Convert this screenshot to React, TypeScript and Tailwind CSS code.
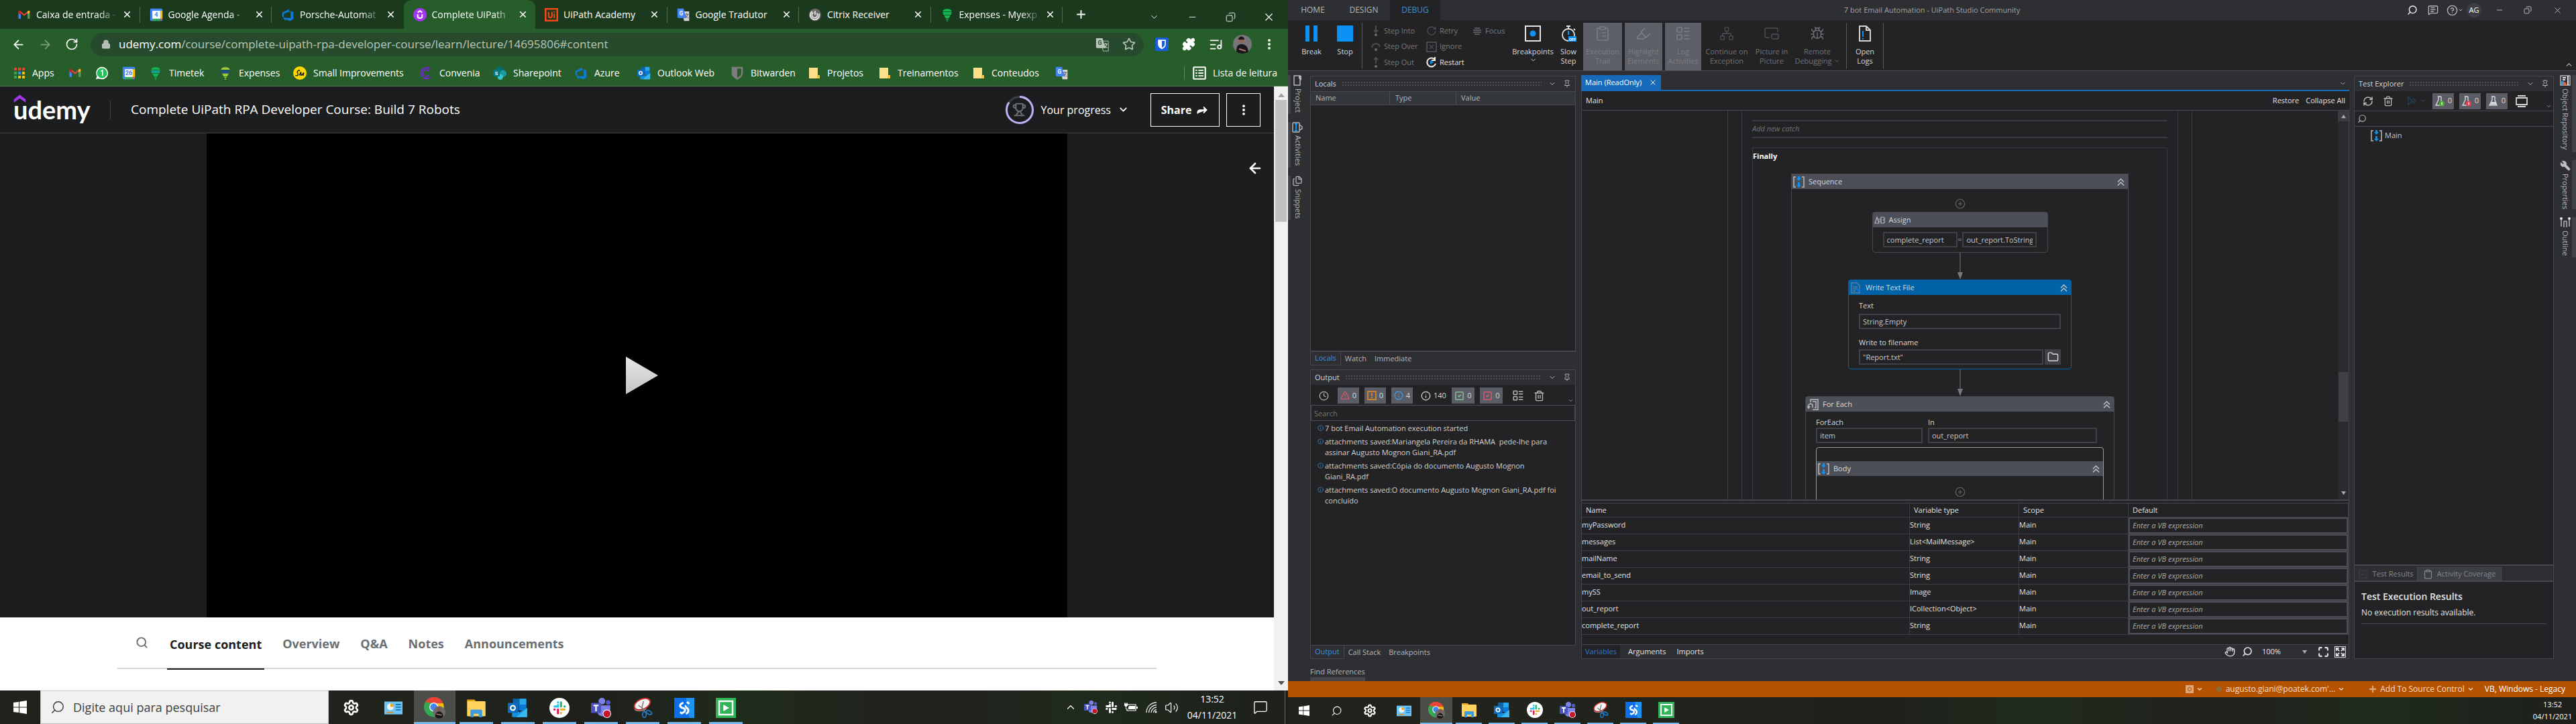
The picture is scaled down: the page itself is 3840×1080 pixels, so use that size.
import React from "react";
import {
  ArrowLeft,
  ArrowRight,
  RotateCw,
  Lock,
  Star,
  Puzzle,
  ListMusic,
  EllipsisVertical,
  X,
  Plus,
  Minus,
  Copy,
  ChevronDown,
  ChevronUp,
  Trophy,
  Forward,
  Search,
  Settings,
  Volume2,
  MessageSquare,
  Trash2,
  Clock,
  Info,
  TriangleAlert,
  Pin,
  Folder,
  RefreshCw,
  Hand,
  Maximize,
  Expand,
  ClipboardList,
  Clipboard,
  Highlighter,
  Network,
  PictureInPicture2,
  Bug,
  CircleHelp,
  Wrench,
  Files,
  SquareCheck,
  CirclePlus,
  LayoutList,
  MessageSquareText,
} from "lucide-react";

type IconProps = { s?: number };

function Svg({ s = 20, box = 24, children }: { s?: number; box?: number; children: React.ReactNode }) {
  return (
    <svg width={s} height={s} viewBox={`0 0 ${box} ${box}`} fill="none" aria-hidden="true" className="shrink-0">
      {children}
    </svg>
  );
}

/* ---------- brand icons ---------- */

const Gmail = ({ s }: IconProps) => (
  <Svg s={s}>
    <path d="M2 6v13h4V9l6 5 6-5v10h4V6l-3-1-7 6-7-6z" fill="#ea4335" />
    <path d="M2 8v11h4V10z" fill="#4285f4" />
    <path d="M18 10v9h4V8z" fill="#34a853" />
    <path d="M18 6v5l4-3V6c0-2-2-2-4 0z" fill="#fbbc04" />
    <path d="M2 6v3l4 3V6C4 4 2 4 2 6z" fill="#c5221f" />
  </Svg>
);

const Calendar = ({ s, day }: IconProps & { day: string }) => (
  <Svg s={s}>
    <rect x="1" y="1" width="22" height="22" rx="2" fill="#4285f4" />
    <rect x="19" y="5" width="4" height="14" fill="#fbbc04" />
    <rect x="5" y="19" width="14" height="4" fill="#34a853" />
    <path d="M19 19h4l-4 4z" fill="#ea4335" />
    <rect x="5" y="5" width="14" height="14" fill="#fff" />
    <text x="12" y="16" textAnchor="middle" fontSize="11" fontWeight="700" fill="#4285f4" fontFamily="Roboto, sans-serif">
      {day}
    </text>
  </Svg>
);

const DevOps = ({ s }: IconProps) => (
  <Svg s={s}>
    <path d="M2 8l12-6v3l8 2v13l-6 3-8-3v3L3 17l14 1V6L5 10v7l-3-2z" fill="#0b7bd8" />
  </Svg>
);

const UdemyMark = ({ s }: IconProps) => (
  <Svg s={s}>
    <circle cx="12" cy="12" r="12" fill="#a435f0" />
    <path d="M8 8l4-3 4 3M8 11v4c0 4 8 4 8 0v-4" stroke="#fff" strokeWidth="2.4" />
  </Svg>
);

const UiPathMark = ({ s }: IconProps) => (
  <Svg s={s}>
    <rect x="1.5" y="1.5" width="21" height="21" stroke="#fa4616" strokeWidth="3" />
    <path d="M7 7v7c0 4 6 4 6 0V7M17 10v8M17 6v2" stroke="#fa4616" strokeWidth="2.4" />
  </Svg>
);

const Translate = ({ s, gray }: IconProps & { gray?: boolean }) => (
  <Svg s={s}>
    <path d="M9 6h13v17H13z" fill={gray ? "#274a2c" : "#d5d5d5"} stroke={gray ? "#b9c6ba" : "none"} />
    <path d="M1 1h11l5 17H3c-1 0-2-1-2-2z" fill={gray ? "#b9c6ba" : "#4285f4"} />
    <text x="7.5" y="13" textAnchor="middle" fontSize="10" fontWeight="700" fill={gray ? "#274a2c" : "#fff"} fontFamily="Roboto, sans-serif">
      G
    </text>
    <path d="M14 11h7M17.500 9v2M19.500 11c-1 4-3 6-4 7M15.500 13c1 3 3 4 5 5" stroke={gray ? "#b9c6ba" : "#5f6368"} strokeWidth="1.300" />
  </Svg>
);

const Citrix = ({ s }: IconProps) => (
  <Svg s={s}>
    <circle cx="12" cy="12" r="11" fill="#6a6a6a" />
    <path d="M7 6a8 8 0 1 0 12 4M9 8a5 5 0 1 0 6 1M12 5v7" stroke="#f1f1f1" strokeWidth="2" />
  </Svg>
);

const Balloon = ({ s, a, b, c }: IconProps & { a: string; b: string; c: string }) => (
  <Svg s={s}>
    <path d="M4 6c1-6 15-6 16 0z" fill={a} />
    <path d="M4 7h16l-1 5H5z" fill={b} />
    <path d="M6 13h12l-3 5H9z" fill={c} />
    <path d="M9 19h6l-2 2h-2zM11 22h2v2h-2z" fill={a} />
  </Svg>
);

const AppsGrid = () => (
  <Svg s={18} box={18}>
    {["#ea4335", "#ea4335", "#ea4335", "#34a853", "#4285f4", "#fbbc04", "#34a853", "#fbbc04", "#fbbc04"].map((c, i) => (
      <rect key={i} x={(i % 3) * 6 + 1} y={Math.floor(i / 3) * 6 + 1} width="4" height="4" fill={c} />
    ))}
  </Svg>
);

const WhatsApp = ({ s }: IconProps) => (
  <Svg s={s}>
    <path d="M12 1a11 11 0 0 1 0 22c-2 0-4 0-6-1l-5 1 2-5C-1 10 4 1 12 1z" fill="#fff" />
    <circle cx="12" cy="12" r="9" fill="#1fc15b" />
    <path d="M10 9l3-2v10" stroke="#fff" strokeWidth="2" />
  </Svg>
);

const SmallImp = ({ s }: IconProps) => (
  <Svg s={s}>
    <circle cx="12" cy="12" r="12" fill="#ffd800" />
    <path d="M4 16c4 2 6-1 4-4s2-6 4-4M11 16l3-6v6c2 0 3-2 5-5l-1 6" stroke="#111" strokeWidth="1.600" />
  </Svg>
);

const Convenia = ({ s }: IconProps) => (
  <Svg s={s}>
    <path d="M19 4A10 10 0 1 0 19 20M17 8a6 6 0 1 0 0 8" stroke="#7c1fe0" strokeWidth="2.400" strokeDasharray="9 1.500" />
  </Svg>
);

const SharePoint = ({ s }: IconProps) => (
  <Svg s={s}>
    <circle cx="12" cy="7" r="7" fill="#036c70" />
    <circle cx="18" cy="13" r="6" fill="#1a9ba1" />
    <circle cx="13" cy="19" r="5" fill="#37c6d0" />
    <rect x="0" y="6" width="12" height="12" rx="1" fill="#03787c" />
    <text x="6" y="15.500" textAnchor="middle" fontSize="9" fontWeight="700" fill="#fff" fontFamily="Roboto, sans-serif">
      S
    </text>
  </Svg>
);

const Outlook = ({ s }: IconProps) => (
  <Svg s={s}>
    <rect x="6" y="1" width="16" height="14" rx="1" fill="#0a64ad" />
    <rect x="14" y="1" width="8" height="8" fill="#28a8ea" />
    <rect x="14" y="8" width="8" height="7" fill="#0f78d4" />
    <path d="M5 12l9 5 9-5v10c0 1-1 1-1 1H6c-1 0-1-1-1-1z" fill="#1490df" />
    <path d="M23 12v10c0 1-1 1-1 1H10z" fill="#35b8f1" />
    <rect x="0" y="6" width="12" height="12" rx="1" fill="#0f6cbd" />
    <circle cx="6" cy="12" r="2.700" stroke="#fff" strokeWidth="1.700" />
  </Svg>
);

const Shield = ({ s, blue }: IconProps & { blue?: boolean }) => (
  <Svg s={s}>
    {blue && <rect width="24" height="24" rx="3" fill="#175ddc" />}
    {blue ? (
      <g>
        <path d="M5 4h14v8c0 5-4 7-7 9-3-2-7-4-7-9z" fill="#fff" />
        <path d="M12 6h5v6c0 3-2 5-5 6z" fill="#175ddc" />
      </g>
    ) : (
      <g>
        <path d="M2 1h20v11c0 6-5 9-10 12C7 21 2 18 2 12z" fill="#7d7d7d" />
        <path d="M12 4h7v8c0 4-3 6-7 8z" fill="#275d2b" />
      </g>
    )}
  </Svg>
);

const BookmarkFolder = () => (
  <Svg s={18} box={18}>
    <path d="M1 1h13v11h2v5H1z" fill="#ffe08a" />
    <path d="M13 12h4v5h-4z" fill="#f5c542" />
  </Svg>
);

const Chrome = ({ s }: IconProps) => (
  <Svg s={s}>
    <circle cx="11" cy="11" r="11" fill="#34a853" />
    <path d="M1.500 5.500A11 11 0 0 1 21.500 7H11z" fill="#ea4335" />
    <path d="M21.500 7A11 11 0 0 1 11 22l5-9-2-6z" fill="#fbbc04" />
    <circle cx="11" cy="11" r="5" fill="#fff" />
    <circle cx="11" cy="11" r="4" fill="#4285f4" />
    <circle cx="17" cy="17" r="7" fill="#6d6a6c" />
    <circle cx="17" cy="13.500" r="2.200" fill="#7b5a4c" />
    <path d="M12.500 22c0-8 9-8 9 0-3 2.500-6 2.500-9 0z" fill="#16161a" />
    <path d="M14 19l6 1" stroke="#b07f6a" strokeWidth="1.200" />
  </Svg>
);

const Explorer = ({ s }: IconProps) => (
  <Svg s={s}>
    <path d="M1 2h9l2 3H1z" fill="#e8a10c" />
    <rect x="1" y="4" width="22" height="18" rx="1" fill="#ffd35c" />
    <path d="M5 23v-7c0-2 1-2 2-2h10c1 0 2 0 2 2v7h-4v-4H9v4z" fill="#3f9be0" />
  </Svg>
);

const Slack = ({ s, mono }: IconProps & { mono?: boolean }) => {
  const c = mono ? ["#fff", "#fff", "#fff", "#fff"] : ["#36c5f0", "#2eb67d", "#ecb22e", "#e01e5a"];
  return (
    <Svg s={s}>
      {!mono && <circle cx="12" cy="12" r="12" fill="#fff" />}
      <g strokeWidth="2.600" strokeLinecap="round">
        <path d="M10.200 8.500v1.700H6M10.200 5.300v.1" stroke={c[0]} />
        <path d="M13.800 5.500v4.700M18.300 10.200h-.4" stroke={c[1]} />
        <path d="M13.800 13.800H18M13.800 18.300v-.4" stroke={c[2]} />
        <path d="M10.200 13.800v4.500M5.900 13.800h.4" stroke={c[3]} />
      </g>
    </Svg>
  );
};

const Teams = ({ s }: IconProps) => (
  <Svg s={s}>
    <circle cx="13" cy="4" r="4" fill="#7b83eb" />
    <circle cx="20.500" cy="5.500" r="2.700" fill="#5059c9" />
    <path d="M8 9h15v8c0 3-3 5-8 5s-7-2-7-5z" fill="#7b83eb" />
    <rect x="0" y="6" width="12" height="12" rx="1" fill="#4b53bc" />
    <path d="M3 9h6M6 9v7" stroke="#fff" strokeWidth="1.800" />
    <circle cx="19" cy="19" r="5" fill="#fff" />
    <circle cx="19" cy="19" r="4.200" fill="#c4172c" />
  </Svg>
);

const Snip = ({ s }: IconProps) => (
  <Svg s={s}>
    <path d="M2 13c0 4 10 4 14 1l1-3z" fill="#8c8c8c" />
    <ellipse cx="11.500" cy="7.500" rx="10" ry="6" transform="rotate(-25 11.500 7.500)" fill="#f4f4f4" stroke="#d22f2f" strokeWidth="1.500" />
    <path d="M13 4l-2 8 4 5M7 9l7 5" stroke="#777" strokeWidth="1.200" />
    <ellipse cx="14" cy="20" rx="2.200" ry="3.300" stroke="#1f78c1" strokeWidth="1.500" />
    <ellipse cx="19.500" cy="17.500" rx="3.500" ry="2" transform="rotate(30 19.500 17.500)" stroke="#1f78c1" strokeWidth="1.500" />
  </Svg>
);

const Studio = ({ s }: IconProps) => (
  <Svg s={s}>
    <rect width="24" height="24" fill="#0a6fe8" />
    <path d="M14 0h10v24H18z" fill="#1e94f0" />
    <path d="M11 6c-5 1-5 5-1 6s4 4 0 6M15 5l3 2M14 9c-1 1 0 2 1 3 3 2 2 6-1 7M7 17l3 2" stroke="#fff" strokeWidth="2.400" />
  </Svg>
);

const Player = ({ s }: IconProps) => (
  <Svg s={s}>
    <rect width="24" height="24" fill="#2fb457" />
    <rect x="4" y="4" width="16" height="16" stroke="#fff" strokeWidth="2" />
    <path d="M9 8l7 4-7 4z" fill="#fff" />
  </Svg>
);

const WinLogo = ({ s }: IconProps) => (
  <Svg s={s} box={20}>
    <path d="M0 3l8-1v7.500H0zM9 1.800L20 0v9.500H9zM0 10.500h8V18l-8-1zM9 10.500h11V20L9 18.200z" fill="#fff" />
  </Svg>
);

const Panel = ({ s }: IconProps) => (
  <Svg s={s}>
    <rect x="0" y="4" width="24" height="17" fill="#6cc5f5" />
    <circle cx="8" cy="11" r="4.500" fill="#e8f6fd" />
    <path d="M8 11V6.500A4.500 4.500 0 0 1 12.500 11z" fill="#f5a21b" />
    <path d="M15 8h7M15 11.500h7M15 15h7" stroke="#1878c8" strokeWidth="1.600" />
    <path d="M3 18.500h9" stroke="#e8891b" strokeWidth="1.600" />
  </Svg>
);

const Battery = () => (
  <Svg s={20} box={20}>
    <path d="M5 6h12v9H4v-3" stroke="#fff" strokeWidth="1.200" />
    <path d="M7 8h9v5H6v-3z" fill="#fff" />
    <path d="M18 9h2v3h-2z" fill="#fff" />
    <path d="M1 3v2M4 3v2M0 5h5v2l-2 2H2L0 7zM2.500 9v4" stroke="#fff" fill="#fff" />
  </Svg>
);

const WifiFan = () => (
  <Svg s={18} box={18}>
    <path d="M2 17C2 8 9 2 17 2M5.500 17C6 10 11 6 17 5.500M9 17c0-4 4-8 8-8M12.500 17c0-2 2-4.500 4.500-4.500" stroke="#e8e8e8" strokeWidth="1.300" />
    <circle cx="16" cy="16" r="1.500" fill="#fff" />
  </Svg>
);

const SearchGlass = ({ s, w = 1.5 }: IconProps & { w?: number }) => (
  <span className="flex -scale-x-100">
    <Search size={s} strokeWidth={w} />
  </span>
);

/* ---------- studio icons ---------- */

const SeqIcon = () => (
  <Svg s={17} box={17}>
    <path d="M4 1H1v15h3M13 1h3v15h-3" stroke="#b8babd" strokeWidth="1.500" />
    <path d="M7 0h3v3h2l-3.500 4L5 3h2zM7 9h3v4h2l-3.500 4L5 13h2z" fill="#0a93f5" />
  </Svg>
);

const AssignIcon = () => (
  <Svg s={16} box={16}>
    <path d="M1 13L4 4l3 9zM6 7h4M6 10h4M10 4h3c3 0 3 4 0 4 3 0 3 5 0 5h-3z" stroke="#b8babd" strokeWidth="1.200" />
  </Svg>
);

const FileIcon = () => (
  <Svg s={17} box={17}>
    <path d="M2 1h8l4 4v11H2zM4 7h7M4 10h7M4 13h4" stroke="#5f7f9c" strokeWidth="1.400" />
    <path d="M10 10h5v3h-2v4z" fill="#0a6fe8" />
  </Svg>
);

const LoopIcon = () => (
  <Svg s={17} box={17}>
    <path d="M5 5V1h11v15H8M8 4h5v9h-2" stroke="#b8babd" strokeWidth="1.500" />
    <path d="M2 13V9l3-2 3 2v4M0 11l2 3 2-3" stroke="#b8babd" strokeWidth="1.500" />
  </Svg>
);

const DoubleUp = () => (
  <Svg s={13} box={13}>
    <path d="M2 6.500L6.500 2 11 6.500M2 11.500L6.500 7l4.500 4.500" stroke="#c5c6c8" strokeWidth="1.400" />
  </Svg>
);

const Flask = ({ badge }: { badge?: string }) => (
  <Svg s={16} box={16}>
    <path d="M5 1h5M6 1v5l-4 8h11l-3-8V1" stroke="#d5d6d8" strokeWidth="1.400" />
    {badge ? <circle cx="11" cy="11.500" r="4" fill={badge} /> : <path d="M5 9h6l2 4H3z" fill="#d5d6d8" />}
    {badge && <path d="M11 9.500v4" stroke="#fff" strokeWidth="1.300" />}
  </Svg>
);

const Pause = () => (
  <Svg s={24}>
    <path d="M3 0h6v24H3zM15 0h6v24h-6z" fill="#0a93f5" />
  </Svg>
);
const StopIcon = () => (
  <Svg s={24}>
    <rect width="24" height="24" fill="#0a93f5" />
  </Svg>
);
const BreakpointIcon = () => (
  <Svg s={24}>
    <rect x="1" y="1" width="22" height="22" stroke="#e4e4e4" strokeWidth="2" />
    <circle cx="12" cy="12" r="4.500" fill="#0a93f5" />
  </Svg>
);
const SlowIcon = () => (
  <Svg s={24}>
    <path d="M9 1h6M12 1v4M20 5l2 2" stroke="#e4e4e4" strokeWidth="1.800" />
    <circle cx="12" cy="14" r="9" stroke="#e4e4e4" strokeWidth="1.800" />
    <path d="M12 8v6" stroke="#0a93f5" strokeWidth="2" />
    <rect x="12" y="16" width="12" height="8" fill="#0a93f5" />
    <text x="18" y="22.500" textAnchor="middle" fontSize="6" fontWeight="700" fill="#fff" fontFamily="Roboto, sans-serif">
      OFF
    </text>
  </Svg>
);
const LogFile = () => (
  <Svg s={24}>
    <path d="M4 1h10l6 6v16H4z M14 1v6h6" stroke="#d4d4d4" strokeWidth="2" />
    <path d="M9 8v9M9 19v2" stroke="#0a93f5" strokeWidth="2" />
  </Svg>
);

const Arrow = ({ up }: { up?: boolean }) => (
  <Svg s={16} box={16}>
    {up ? <path d="M8 10V2M5 4l3-3 3 3" stroke="#4a4c50" strokeWidth="2" /> : <path d="M8 0v9M5 7l3 3 3-3" stroke="#4a4c50" strokeWidth="2" />}
    <circle cx="8" cy="14" r="2" fill="#6a6c70" />
  </Svg>
);
const Over = () => (
  <Svg s={16} box={16}>
    <path d="M2 9c1-7 10-8 12-1" stroke="#4a4c50" strokeWidth="2" />
    <circle cx="8" cy="12" r="2" fill="#6a6c70" />
  </Svg>
);
const IgnoreIcon = () => (
  <Svg s={16} box={16}>
    <rect x="1" y="1" width="14" height="14" stroke="#55575a" strokeWidth="1.500" />
    <path d="M5 5l6 6M11 5l-6 6" stroke="#4a4c50" strokeWidth="1.500" />
  </Svg>
);
const FocusIcon = () => (
  <Svg s={16} box={16}>
    <path d="M4 4h8M2 7h12M2 10h12M4 13h8" stroke="#6a6c70" strokeWidth="1.500" />
  </Svg>
);
const RestartIcon = () => (
  <Svg s={16} box={16}>
    <path d="M13 4A6.500 6.500 0 1 0 14 10M13 0v5H8" stroke="#f0f0f0" strokeWidth="2" />
    <path d="M6 5l5 3-5 3z" fill="#0a93f5" />
  </Svg>
);

/* ---------- Chrome window ---------- */

const tabs: { label: string; icon: React.ReactNode; active?: boolean; fade?: boolean }[] = [
  { label: "Caixa de entrada -", icon: <Gmail s={20} />, fade: true },
  { label: "Google Agenda -", icon: <Calendar s={20} day="4" />, fade: true },
  { label: "Porsche-Automat", icon: <DevOps s={20} />, fade: true },
  { label: "Complete UiPath", icon: <UdemyMark s={20} />, active: true, fade: true },
  { label: "UiPath Academy", icon: <UiPathMark s={20} /> },
  { label: "Google Tradutor", icon: <Translate s={20} /> },
  { label: "Citrix Receiver", icon: <Citrix s={20} /> },
  { label: "Expenses - Myexp", icon: <Balloon s={20} a="#12b84f" b="#15b453" c="#12b84f" />, fade: true },
];

const bookmarks: { label?: string; icon: React.ReactNode; w: string }[] = [
  { label: "Apps", icon: <AppsGrid />, w: "w-[82px]" },
  { icon: <Gmail s={20} />, w: "w-[40px]" },
  { icon: <WhatsApp s={20} />, w: "w-[40px]" },
  { icon: <Calendar s={20} day="26" />, w: "w-[40px]" },
  { label: "Timetek", icon: <Balloon s={20} a="#12b84f" b="#10a58a" c="#12b84f" />, w: "w-[104px]" },
  { label: "Expenses", icon: <Balloon s={20} a="#9dc93a" b="#1c4f8b" c="#9dc93a" />, w: "w-[111px]" },
  { label: "Small Improvements", icon: <SmallImp s={20} />, w: "w-[188px]" },
  { label: "Convenia", icon: <Convenia s={20} />, w: "w-[110px]" },
  { label: "Sharepoint", icon: <SharePoint s={20} />, w: "w-[121px]" },
  { label: "Azure", icon: <DevOps s={20} />, w: "w-[94px]" },
  { label: "Outlook Web", icon: <Outlook s={20} />, w: "w-[139px]" },
  { label: "Bitwarden", icon: <Shield s={20} />, w: "w-[116px]" },
  { label: "Projetos", icon: <BookmarkFolder />, w: "w-[105px]" },
  { label: "Treinamentos", icon: <BookmarkFolder />, w: "w-[140px]" },
  { label: "Conteudos", icon: <BookmarkFolder />, w: "w-[123px]" },
  { icon: <Translate s={20} />, w: "w-[40px]" },
];

function ChromeWindow() {
  return (
    <div className="flex flex-1 flex-col overflow-hidden text-white">
      <div className="flex h-[43px] items-end bg-[#1b3a1d]">
        <div className="flex h-full w-[1584px] shrink pl-3" role="tablist">
          {tabs.map((t, i) => (
            <div
              key={t.label}
              className={
                "flex min-w-0 flex-1 items-center pl-3.5 pr-3 " +
                (t.active ? "rounded-t-xl bg-[#275d2b]" : "bg-[#1b3a1d]")
              }
            >
              <button role="tab" aria-selected={!!t.active} className="flex min-w-0 flex-1 items-center gap-2 text-left">
                {t.icon}
                <span
                  className={
                    "w-[124px] overflow-hidden whitespace-nowrap text-[14px] leading-6 " +
                    (t.fade ? "[mask-image:linear-gradient(90deg,#000_75%,transparent_98%)]" : "")
                  }
                >
                  {t.label}
                </span>
              </button>
              <button aria-label="Close tab" className="flex w-4 justify-center">
                <X size={15} strokeWidth={2.5} />
              </button>
              <span className={"ml-2.5 -mr-3 h-6 w-px " + (i === 2 || i === 3 ? "bg-transparent" : "bg-[#4f6c51]")} />
            </div>
          ))}
        </div>
        <button aria-label="New tab" className="flex h-full w-[54px] items-center justify-center">
          <Plus size={19} strokeWidth={2.4} />
        </button>
        <div className="ml-auto flex h-9 items-center">
          {[ChevronDown, Minus, Copy, X].map((Ico, i) => (
            <button key={i} aria-label={["Search tabs", "Minimize", "Restore window", "Close window"][i]} className="flex w-[57px] justify-center">
              <span className={i === 2 ? "flex -scale-x-100" : "flex"}>
                <Ico size={i === 3 ? 19 : 15} strokeWidth={1.4} />
              </span>
            </button>
          ))}
        </div>
      </div>

      <div className="flex h-[46px] items-center bg-[#275d2b] pl-[17px] pr-2">
        <button aria-label="Back" className="w-10">
          <ArrowLeft size={21} />
        </button>
        <button aria-label="Forward" className="w-10 text-[#7f9f81]">
          <ArrowRight size={21} />
        </button>
        <button aria-label="Reload" className="w-[38px]">
          <RotateCw size={20} />
        </button>
        <div className="flex h-[35px] flex-1 items-center rounded-full bg-[#274a2c] pl-4 pr-3 text-[#b9c6ba]">
          <Lock size={14} fill="#b5bab6" strokeWidth={2.5} />
          <p className="ml-3 flex-1 truncate text-[17px] leading-6">
            <span className="text-white">udemy.com</span>
            /course/complete-uipath-rpa-developer-course/learn/lecture/14695806#content
          </p>
          <button aria-label="Translate page" className="w-10">
            <Translate s={21} gray />
          </button>
          <button aria-label="Bookmark page">
            <Star size={20} />
          </button>
        </div>
        <div className="grid grid-cols-[repeat(5,40px)] items-center justify-items-center pl-[7px]">
          <button aria-label="Bitwarden">
            <Shield s={20} blue />
          </button>
          <button aria-label="Extensions">
            <Puzzle size={20} fill="#fff" />
          </button>
          <button aria-label="Media">
            <ListMusic size={21} />
          </button>
          <button aria-label="Profile">
            <Svg s={28} box={28}>
              <circle cx="14" cy="14" r="14" fill="#77747a" />
              <path d="M5 25c0-10 4-11 8-11s9 2 10 11c-5 4-13 4-18 0z" fill="#17171b" />
              <circle cx="12.500" cy="8.500" r="4.500" fill="#8d6656" />
              <path d="M8 7c0-6 9-6 9 0z" fill="#1a1616" />
              <path d="M9 21l10 3" stroke="#b07f6a" strokeWidth="2" />
            </Svg>
          </button>
          <button aria-label="Menu">
            <EllipsisVertical size={20} strokeWidth={2.6} />
          </button>
        </div>
      </div>

      <nav className="flex h-10 items-center border-b border-[#4f8053] bg-[#275d2b] pl-[20px] text-[14px]">
        {bookmarks.map((b, i) => (
          <a key={i} href="#bookmark" aria-label={b.label ?? "Bookmark"} className={"flex shrink-0 items-center gap-2.5 whitespace-nowrap " + b.w}>
            {b.icon}
            {b.label && <span>{b.label}</span>}
          </a>
        ))}
        <button className="ml-auto flex h-5 items-center gap-2.5 border-l border-[#5c8a5f] pl-3 pr-4">
          <Svg s={20}>
            <rect x="1.500" y="1.500" width="21" height="21" rx="1" stroke="#fff" strokeWidth="2.500" />
            <path d="M5 7h3M10 7h9M5 12h3M10 12h9M5 17h3M10 17h9" stroke="#fff" strokeWidth="2.200" />
          </Svg>
          Lista de leitura
        </button>
      </nav>

      <div className="flex min-h-0 flex-1">
        <div className="flex min-w-0 flex-1 flex-col">
          <header className="flex h-[70px] items-center border-b border-[#3e4143] bg-[#1c1d1f] pl-5 pr-5">
            <a href="#udemy" aria-label="udemy" className="flex w-[114px] flex-col pb-4 leading-none">
              <Svg s={19}>
                <path d="M1 24V18L12 9l11 9v6l-11-8z" fill="#a435f0" />
              </Svg>
              <span className="-mt-1 font-['Lato'] text-[38px] font-bold leading-[28px]">udemy</span>
            </a>
            <span className="ml-[30px] mr-[30px] h-7 w-px bg-[#3e4143]" />
            <h1 className="text-[19px]">Complete UiPath RPA Developer Course: Build 7 Robots</h1>
            <button className="ml-auto flex items-center gap-2.5 text-[16px]">
              <span className="relative flex">
                <Svg s={44} box={44}>
                  <circle cx="22" cy="22" r="19.500" stroke="#3e4143" strokeWidth="3" />
                  <circle cx="22" cy="22" r="19.500" stroke="#c0b0f5" strokeWidth="3" pathLength="100" strokeDasharray="85 15" transform="rotate(-90 22 22)" />
                </Svg>
                <span className="absolute inset-0 flex items-center justify-center text-[#6a6f73]">
                  <Trophy size={21} strokeWidth={2.4} />
                </span>
              </span>
              <span>Your progress</span>
              <ChevronDown size={17} strokeWidth={2.6} />
            </button>
            <button className="ml-8 flex h-[50px] w-[103px] items-center justify-center gap-1.5 border border-white text-[16px] font-bold">
              Share <Forward size={20} fill="#fff" />
            </button>
            <button aria-label="More options" className="ml-2.5 flex h-[50px] w-[51px] items-center justify-center border border-white">
              <EllipsisVertical size={20} strokeWidth={2.6} />
            </button>
          </header>
          <div className="flex min-h-0 flex-1 bg-[#1c1d1f]">
            <div className="w-[308px] shrink-0" />
            <div className="flex flex-1 items-center justify-center bg-black pl-3.5">
              <button aria-label="Play">
                <svg width="52" height="58" viewBox="0 0 52 58" aria-hidden="true">
                  <defs>
                    <linearGradient id="play" x1="0" y1="0" x2="0" y2="1">
                      <stop offset="0" stopColor="#e6e6e6" />
                      <stop offset="1" stopColor="#c4c4c4" />
                    </linearGradient>
                  </defs>
                  <path d="M2 1l48 28L2 57z" fill="url(#play)" />
                </svg>
              </button>
            </div>
            <div className="flex w-[308px] shrink-0 items-start justify-end pr-4 pt-10">
              <button aria-label="Open course sidebar">
                <ArrowLeft size={24} strokeWidth={2.6} />
              </button>
            </div>
          </div>
          <div className="flex h-[109px] flex-col bg-white px-[175px]">
            <div className="flex h-[77px] items-center gap-[31px] border-b-2 border-[#d1d7dc] pl-[27px] text-[18px] font-bold text-[#6a6f73]" role="tablist">
              <button aria-label="Search course" className="mr-[-3px]">
                <Search size={19} strokeWidth={2.4} />
              </button>
              <button role="tab" aria-selected="true" className="-mb-0.5 h-[79px] border-b-2 border-[#1c1d1f] px-1 pt-1.5 text-[#1c1d1f]">
                Course content
              </button>
              <button role="tab" className="-ml-1 pt-1">Overview</button>
              <button role="tab" className="pt-1">Q&amp;A</button>
              <button role="tab" className="pt-1">Notes</button>
              <button role="tab" className="pt-1">Announcements</button>
            </div>
          </div>
        </div>
        <div className="flex w-[21px] flex-col items-center bg-[#f1f1f1] pt-2">
          <Svg s={10} box={10}>
            <path d="M0 8l5-6 5 6z" fill="#a3a3a3" />
          </Svg>
          <div className="mt-0.5 h-[182px] w-[17px] bg-[#c1c1c1]" />
          <div className="mt-auto pb-1.5">
            <Svg s={10} box={10}>
              <path d="M0 2l5 6 5-6z" fill="#505050" />
            </Svg>
          </div>
        </div>
      </div>
    </div>
  );
}

/* ---------- taskbars ---------- */

const apps = [Explorer, Outlook, Slack, Teams, Snip, Studio, Player];

const barBg =
  "bg-[linear-gradient(90deg,#22221c,#20241d_35%,#1f1f1b_45%,#1f2c1c_58%,#21201d_72%,#1f2b1c_84%,#1e1f1c)]";

function TaskbarLeft() {
  return (
    <footer className={"flex h-[50px] text-white " + barBg}>
      <button aria-label="Start" className="flex w-[60px] items-center justify-center">
        <WinLogo s={20} />
      </button>
      <label className="flex w-[430px] items-center gap-3 border border-[#c3c3c3] bg-[#f1f1f1] pl-3.5 text-[#333]">
        <SearchGlass s={22} />
        <input aria-label="Pesquisar" placeholder="Digite aqui para pesquisar" className="w-80 bg-transparent text-[18px] placeholder:text-[#404040] focus:outline-none" />
      </label>
      <button aria-label="Configurações" className="flex w-[66px] items-center justify-center">
        <Settings size={25} strokeWidth={2.6} />
      </button>
      <button aria-label="Painel" className="flex w-[61px] items-center justify-center">
        <Panel s={27} />
      </button>
      <button aria-label="Chrome" className="flex w-[62px] items-center justify-center border-b-[3px] border-[#76b9ed] bg-[#4b4d49] pt-1">
        <Chrome s={32} />
      </button>
      {apps.map((A, i) => (
        <button key={i} aria-label={"App " + (i + 1)} className="flex w-[62px] px-[6px]">
          <span className="flex h-full w-full items-center justify-center border-b-[3px] border-[#76b9ed] pt-1">
            <A s={30} />
          </span>
        </button>
      ))}
      <div className="ml-auto flex items-center">
        {[
          <ChevronUp size={18} strokeWidth={1.6} key="a" />,
          <Teams s={20} key="b" />,
          <Slack s={27} mono key="c" />,
          <Battery key="d" />,
          <WifiFan key="e" />,
          <Volume2 size={21} strokeWidth={1.4} key="f" />,
        ].map((n, i) => (
          <span key={i} className="flex w-[30px] justify-center">
            {n}
          </span>
        ))}
        <div className="w-[92px] text-center text-[14px] leading-6">
          <p>13:52</p>
          <p>04/11/2021</p>
        </div>
        <button aria-label="Notificações" className="flex w-[52px] justify-center">
          <MessageSquare size={22} strokeWidth={1.4} />
        </button>
        <span className="ml-[10px] mr-1 h-[50px] w-px bg-[#6b6d69]" />
      </div>
    </footer>
  );
}

function TaskbarRight() {
  return (
    <footer className={"flex h-10 text-white " + barBg}>
      <button aria-label="Start" className="flex w-[48px] items-center justify-center">
        <WinLogo s={16} />
      </button>
      <button aria-label="Pesquisar" className="flex w-12 items-center justify-center">
        <SearchGlass s={17} />
      </button>
      <button aria-label="Configurações" className="flex w-[52px] items-center justify-center">
        <Settings size={20} strokeWidth={2.6} />
      </button>
      <button aria-label="Painel" className="flex w-[49px] items-center justify-center">
        <Panel s={22} />
      </button>
      <button aria-label="Chrome" className="flex w-[48px] items-center justify-center border-b-2 border-[#76b9ed] bg-[#4b4d49]">
        <Chrome s={25} />
      </button>
      {apps.map((A, i) => (
        <button key={i} aria-label={"App " + (i + 1)} className="flex w-[49px] px-[5px]">
          <span className="flex h-full w-full items-center justify-center border-b-2 border-[#76b9ed]">
            <A s={24} />
          </span>
        </button>
      ))}
      <div className="ml-auto flex w-[70px] flex-col justify-center text-center text-[11px] leading-[18px]">
        <p>13:52</p>
        <p>04/11/2021</p>
      </div>
    </footer>
  );
}

/* ---------- Studio window ---------- */

const dots = "bg-[radial-gradient(circle,#4a4c51_1px,transparent_1px)] bg-[length:4px_4px]";

function DockHeader({ title }: { title: string }) {
  return (
    <div className="flex h-[22px] items-center gap-2 bg-[#2d2f33] px-1.5">
      <span className="text-[#d5d6d8]">{title}</span>
      <span className={"h-2 flex-1 " + dots} />
      <button aria-label="Options" className="flex w-4 justify-center">
        <ChevronDown size={12} />
      </button>
      <button aria-label={"Pin " + title}>
        <Pin size={12} />
      </button>
    </div>
  );
}

function DockTabs({ items }: { items: string[] }) {
  return (
    <div className="flex h-5 shrink-0" role="tablist">
      {items.map((t, i) => (
        <button
          key={t}
          role="tab"
          aria-selected={i === 0}
          className={"flex items-center px-1.5 " + (i === 0 ? "border border-t-0 border-[#45474d] text-[#3d8fd6]" : "")}
        >
          {t}
        </button>
      ))}
    </div>
  );
}

function Big({ icon, a, b, w, tone = "text-[#d8d9da]" }: { icon: React.ReactNode; a: string; b?: React.ReactNode; w: string; tone?: string }) {
  return (
    <button className={"flex h-[71px] shrink-0 flex-col items-center pt-1 leading-[14px] whitespace-nowrap " + w + " " + tone}>
      <span className="mb-2 flex h-6 items-center">{icon}</span>
      <span>{a}</span>
      {b}
    </button>
  );
}

function Small({ icon, label, on }: { icon: React.ReactNode; label: string; on?: boolean }) {
  return (
    <button className={"flex h-6 items-center gap-1 whitespace-nowrap " + (on ? "text-[#e4e4e4]" : "text-[#77797c]")}>
      {icon}
      {label}
    </button>
  );
}

function Ribbon() {
  const off = "text-[#707276]";
  const pressed = "bg-[#5c5f67] text-[#7b7e85] ml-1";
  return (
    <div className="flex h-[76px] border-b border-[#4a4c50] bg-[#232325] pl-2.5 pt-1">
      <Big w="w-[50px]" icon={<Pause />} a="Break" />
      <Big w="w-[50px]" icon={<StopIcon />} a="Stop" />
      <span className="h-[69px] w-px bg-[#55575b]" />
      <div className="flex w-[83px] flex-col pl-3">
        <Small icon={<Arrow />} label="Step Into" />
        <Small icon={<Over />} label="Step Over" />
        <Small icon={<Arrow up />} label="Step Out" />
      </div>
      <div className="flex w-[68px] flex-col pl-3">
        <Small icon={<RotateCw size={16} color="#4a4c50" />} label="Retry" />
        <Small icon={<IgnoreIcon />} label="Ignore" />
        <Small on icon={<RestartIcon />} label="Restart" />
      </div>
      <div className="flex w-[68px] flex-col pl-3">
        <Small icon={<FocusIcon />} label="Focus" />
      </div>
      <Big w="w-[70px]" icon={<BreakpointIcon />} a="Breakpoints" b={<ChevronDown size={11} />} />
      <Big w="w-[36px]" icon={<SlowIcon />} a="Slow" b={<span>Step</span>} />
      <Big w="w-[58px]" tone={pressed} icon={<ClipboardList size={24} strokeWidth={1.6} />} a="Execution" b={<span>Trail</span>} />
      <Big w="w-[56px]" tone={pressed} icon={<Highlighter size={24} strokeWidth={1.6} />} a="Highlight" b={<span>Elements</span>} />
      <Big w="w-[54px]" tone={pressed} icon={<LayoutList size={24} strokeWidth={1.6} />} a="Log" b={<span>Activities</span>} />
      <Big w="w-[76px]" tone={off} icon={<Network size={22} strokeWidth={1.4} color="#4f5155" />} a="Continue on" b={<span>Exception</span>} />
      <Big w="w-[58px]" tone={off} icon={<PictureInPicture2 size={24} strokeWidth={1.4} color="#4f5155" />} a="Picture in" b={<span>Picture</span>} />
      <Big
        w="w-[78px]"
        tone={off}
        icon={<Bug size={22} strokeWidth={1.6} />}
        a="Remote"
        b={
          <span className="flex items-center gap-0.5">
            Debugging <ChevronDown size={10} />
          </span>
        }
      />
      <span className="ml-1 h-[69px] w-px bg-[#55575b]" />
      <Big w="w-[54px]" icon={<LogFile />} a="Open" b={<span>Logs</span>} />
      <span className="h-[69px] w-px bg-[#55575b]" />
      <button aria-label="Collapse ribbon" className="ml-auto self-end pb-0.5 pr-1">
        <ChevronUp size={13} strokeWidth={2.4} />
      </button>
    </div>
  );
}

function Rail({ items, right }: { items: { label: string; icon: React.ReactNode; h: string }[]; right?: boolean }) {
  return (
    <div className={"flex w-[33px] shrink-0 flex-col gap-3 pt-1.5 " + (right ? "items-end" : "items-start")}>
      {items.map((it) => (
        <button
          key={it.label}
          className={
            "flex flex-col items-center gap-1 whitespace-nowrap text-[#b5b6b8] " +
            it.h +
            (right ? " border-r-[6px] border-[#42444a] pr-0.5" : " border-l-4 border-[#42444a] pl-0.5")
          }
        >
          {it.icon}
          <span className="[writing-mode:vertical-rl]">{it.label}</span>
        </button>
      ))}
    </div>
  );
}

function Toggle({ icon, n, w }: { icon: React.ReactNode; n: string; w: string }) {
  return (
    <button className={"flex h-6 items-center justify-center gap-1 bg-[#5a5d65] text-[#d5d6d8] " + w}>
      {icon}
      {n}
    </button>
  );
}

const logs = [
  ["7 bot Email Automation execution started"],
  ["attachments saved:Mariangela Pereira da RHAMA  pede-lhe para", "assinar Augusto Mognon Giani_RA.pdf"],
  ["attachments saved:Cópia do documento Augusto Mognon", "Giani_RA.pdf"],
  ["attachments saved:O documento Augusto Mognon Giani_RA.pdf foi", "concluído"],
];

function LeftDock() {
  return (
    <div className="flex w-[396px] shrink-0 flex-col pt-[7px]">
      <section className="flex h-[412px] flex-col border border-b-2 border-[#45474d] bg-[#232325]">
        <DockHeader title="Locals" />
        <div className="flex h-[21px] items-center border-y border-[#45474d] bg-[#34373b]">
          <span className="flex h-full w-[118px] items-center border-r border-[#4b4e53] pl-[7px]">Name</span>
          <span className="flex h-full w-[99px] items-center border-r border-[#4b4e53] pl-2">Type</span>
          <span className="pl-[7px]">Value</span>
        </div>
      </section>
      <DockTabs items={["Locals", "Watch", "Immediate"]} />
      <section className="mt-1.5 flex min-h-0 flex-1 flex-col border border-[#45474d] bg-[#232325]">
        <DockHeader title="Output" />
        <div className="flex h-[30px] items-end gap-2 pl-3 pb-0.5">
          <button aria-label="Timestamps" className="flex h-6 w-5 items-center">
            <Clock size={15} />
          </button>
          <Toggle w="w-8" icon={<TriangleAlert size={14} color="#f0566a" />} n="0" />
          <Toggle
            w="w-8"
            icon={
              <Svg s={14} box={14}>
                <rect x="1" y="1" width="12" height="12" stroke="#f08c1a" strokeWidth="1.500" />
                <path d="M7 3v5M7 9v2" stroke="#f08c1a" strokeWidth="1.500" />
              </Svg>
            }
            n="0"
          />
          <Toggle w="w-8" icon={<Info size={14} color="#3f9fee" />} n="4" />
          <button className="ml-1 flex h-6 items-center gap-1 text-[#d5d6d8]">
            <Info size={15} />
            140
          </button>
          <Toggle w="w-[34px]" icon={<SquareCheck size={15} color="#8fd09c" />} n="0" />
          <Toggle w="w-[34px]" icon={<SquareCheck size={15} color="#f0566a" />} n="0" />
          <button aria-label="Word wrap" className="ml-1.5 flex h-6 items-center">
            <LayoutList size={18} />
          </button>
          <button aria-label="Clear" className="ml-1.5 flex h-6 items-center">
            <Trash2 size={17} />
          </button>
          <span className="ml-auto pr-0.5">
            <ChevronDown size={9} />
          </span>
        </div>
        <input aria-label="Search output" placeholder="Search" className="h-6 border border-[#4b4d53] bg-[#232325] px-1 placeholder:text-[#707276]" />
        <ul className="flex flex-col gap-1 pl-2.5 pt-[3px] leading-4 text-[#d0d1d3]">
          {logs.map((l) => (
            <li key={l[0]} className="flex gap-0.5">
              <span className="pt-[3px]">
                <Info size={9} color="#3f8fd0" />
              </span>
              <span className="whitespace-pre">
                {l.map((x) => (
                  <span key={x} className="block">
                    {x}
                  </span>
                ))}
              </span>
            </li>
          ))}
        </ul>
      </section>
      <DockTabs items={["Output", "Call Stack", "Breakpoints"]} />
    </div>
  );
}

function NodeHead({ icon, title, blue, open = true }: { icon: React.ReactNode; title: string; blue?: boolean; open?: boolean }) {
  return (
    <div className={"flex h-[22px] items-center gap-1 pl-0.5 pr-1 text-[#d8d9db] " + (blue ? "bg-[#0063a8]" : "bg-[#4c4f57]")}>
      {icon}
      <span className="flex-1 pl-0.5">{title}</span>
      {open && (
        <button aria-label={"Collapse " + title}>
          <DoubleUp />
        </button>
      )}
    </div>
  );
}

const field = "h-[23px] border-2 border-[#3f4147] bg-[#232325] px-1 text-[#c5c6c8] min-w-0";

const Down = () => (
  <svg width="10" height="40" viewBox="0 0 10 40" aria-hidden="true">
    <path d="M5 0v30" stroke="#77797c" />
    <path d="M1 29h8l-4 11z" fill="#77797c" />
  </svg>
);

function Canvas() {
  return (
    <div className="flex min-h-0 flex-1 overflow-hidden bg-[#232325]">
      <div className="min-h-0 min-w-0 flex-1 overflow-hidden">
        <div className="ml-[217px] flex h-full w-[693px] border-x border-[#3c3d42] px-5">
          <div className="flex flex-1 flex-col border-x border-[#3c3d42] px-[15px] pt-3.5">
            <div className="flex h-[27px] shrink-0 items-center border-y-2 border-[#3a3b40] italic text-[#707276]">Add new catch</div>
            <div className="mt-3.5 flex min-h-0 flex-1 flex-col items-center overflow-hidden border border-b-0 border-[#3a3b40]">
              <p className="w-full pt-1 font-bold leading-4 text-white">Finally</p>
              <div className="mt-[18px] flex w-[503px] shrink-0 flex-col items-center border border-[#45474d]">
                <div className="w-full">
                  <NodeHead icon={<SeqIcon />} title="Sequence" />
                </div>
                <button aria-label="Add activity" className="mt-3.5 text-[#66686c]">
                  <CirclePlus size={16} strokeWidth={1.6} />
                </button>
                <div className="mt-1 w-[262px] rounded-sm border border-[#45474d]">
                  <NodeHead icon={<AssignIcon />} title="Assign" open={false} />
                  <div className="flex items-center justify-between px-[15px] py-[7px]">
                    <input aria-label="Assign to" readOnly value="complete_report" className={field + " w-[111px]"} />
                    <span>=</span>
                    <input aria-label="Assign value" readOnly value="out_report.ToString" className={field + " w-[111px]"} />
                  </div>
                </div>
                <Down />
                <div className="w-[333px] rounded-sm border border-[#0063a8]">
                  <NodeHead blue icon={<FileIcon />} title="Write Text File" />
                  <div className="flex flex-col px-[15px] pb-1.5 pt-2 text-[#d8d9da]">
                    <label htmlFor="wt-text" className="leading-4">
                      Text
                    </label>
                    <input id="wt-text" readOnly value="String.Empty" className={field + " mt-1"} />
                    <label htmlFor="wt-file" className="mt-3 leading-4">
                      Write to filename
                    </label>
                    <div className="mt-0.5 flex gap-0.5">
                      <input id="wt-file" readOnly value={'"Report.txt"'} className={field + " flex-1"} />
                      <button aria-label="Browse" className="flex h-[23px] w-6 items-center justify-center bg-[#3f4147]">
                        <Folder size={17} />
                      </button>
                    </div>
                  </div>
                </div>
                <Down />
                <div className="w-[461px] rounded-sm border border-[#45474d]">
                  <NodeHead icon={<LoopIcon />} title="For Each" />
                  <div className="flex gap-2 px-[15px] pt-2 text-[#d8d9da]">
                    <label className="flex w-[159px] flex-col leading-4">
                      ForEach
                      <input readOnly value="item" className={field} />
                    </label>
                    <label className="flex w-[252px] flex-col leading-4">
                      In
                      <input readOnly value="out_report" className={field} />
                    </label>
                  </div>
                  <div className="mx-[15px] mt-1.5 flex h-40 flex-col items-center rounded-sm border border-[#9a9b9d] pt-5">
                    <div className="w-full">
                      <NodeHead icon={<SeqIcon />} title="Body" />
                    </div>
                    <button aria-label="Add activity to body" className="mt-4 text-[#66686c]">
                      <CirclePlus size={16} strokeWidth={1.6} />
                    </button>
                  </div>
                </div>
              </div>
            </div>
          </div>
        </div>
      </div>
      <div className="flex w-4 flex-col items-center bg-[#2a2b2f]">
        <div className="flex h-4 w-full items-center justify-center bg-[#3a3b40]">
          <Svg s={7} box={8}>
            <path d="M0 7l4-6 4 6z" fill="#a8a9ab" />
          </Svg>
        </div>
        <div className="mt-[374px] h-[74px] w-3.5 bg-[#3f4147]" />
        <div className="mt-auto pb-1.5">
          <Svg s={7} box={8}>
            <path d="M0 1l4 6 4-6z" fill="#a8a9ab" />
          </Svg>
        </div>
      </div>
    </div>
  );
}

const vars = [
  ["myPassword", "String"],
  ["messages", "List<MailMessage>"],
  ["mailName", "String"],
  ["email_to_send", "String"],
  ["mySS", "Image"],
  ["out_report", "ICollection<Object>"],
  ["complete_report", "String"],
];

function Variables() {
  return (
    <div className="border-t-2 border-[#45474d] bg-[#232325] pt-[3px]">
      <div className="h-[212px] border-y border-[#45474d]">
        <table className="w-full table-fixed border-collapse text-left text-[#e0e1e2]">
          <colgroup>
            <col />
            <col className="w-[163px]" />
            <col className="w-[163px]" />
            <col className="w-[328px]" />
          </colgroup>
          <thead>
            <tr className="h-[20px]">
              {["Name", "Variable type", "Scope", "Default"].map((h) => (
                <th key={h} className="border-b border-r border-[#3c3e43] p-0 pl-1.5 font-normal leading-[18px]">
                  {h}
                </th>
              ))}
            </tr>
          </thead>
          <tbody>
            {vars.map((v) => (
              <tr key={v[0]} className="h-[25px]">
                <td className="border border-l-0 border-[#3c3e43] p-0">{v[0]}</td>
                <td className="border border-[#3c3e43] p-0">{v[1]}</td>
                <td className="border border-[#3c3e43] p-0">Main</td>
                <td className="border border-[#3c3e43] p-0">
                  <input
                    aria-label={"Default for " + v[0]}
                    placeholder="Enter a VB expression"
                    className="block h-6 w-full border-2 border-[#4c4e57] bg-[#232325] px-1 italic placeholder:text-[#a9aaac]"
                  />
                </td>
              </tr>
            ))}
          </tbody>
        </table>
      </div>
      <div className="flex h-[21px] items-center border-b border-[#45474d] bg-[#2d2f33] text-[#e4e4e4]">
        <button className="h-full w-[57px] bg-[#232325] text-[#2f78cf]">Variables</button>
        <button className="ml-3">Arguments</button>
        <button className="ml-4">Imports</button>
        <button aria-label="Pan" className="ml-auto">
          <Hand size={16} />
        </button>
        <button aria-label="Zoom" className="ml-2.5">
          <SearchGlass s={16} w={2.4} />
        </button>
        <select aria-label="Zoom level" className="ml-3.5 w-11 appearance-none bg-transparent">
          <option>100%</option>
        </select>
        <span className="mx-4">
          <Svg s={7} box={8}>
            <path d="M0 1l4 6 4-6z" fill="#a8a9ab" />
          </Svg>
        </span>
        <button aria-label="Fit to screen">
          <Maximize size={17} strokeWidth={3} />
        </button>
        <button aria-label="Overview" className="ml-2 mr-1 border border-[#d8d9da]">
          <Expand size={15} strokeWidth={3} />
        </button>
      </div>
    </div>
  );
}

function Documents() {
  return (
    <div className="ml-2 mr-[7px] flex min-w-0 flex-1 flex-col">
      <div className="flex h-[30px] items-end border-b-2 border-[#1769ba]">
        <div className="flex h-[22px] w-[119px] items-center justify-between bg-[#1769ba] px-1.5 text-white">
          <button className="whitespace-nowrap">Main (ReadOnly)</button>
          <button aria-label="Close document">
            <X size={12} />
          </button>
        </div>
        <button aria-label="Document list" className="ml-auto pb-1 pr-1">
          <ChevronDown size={11} />
        </button>
      </div>
      <div className="flex h-[29px] items-center border-b border-l border-[#45474d] bg-[#232325] px-1.5 text-[#e4e4e4]">
        <span>Main</span>
        <button className="ml-auto">Restore</button>
        <button className="ml-2.5">Collapse All</button>
      </div>
      <div className="flex min-h-0 flex-1 flex-col border-x border-[#45474d]">
        <Canvas />
        <Variables />
      </div>
    </div>
  );
}

function TestExplorer() {
  return (
    <div className="flex w-[298px] shrink-0 flex-col pt-[7px]">
      <section className="flex min-h-0 flex-1 flex-col border border-[#45474d] bg-[#232325]">
        <DockHeader title="Test Explorer" />
        <div className="flex h-[30px] items-center gap-2 border-b border-[#45474d] pl-3">
          <button aria-label="Refresh">
            <RefreshCw size={16} strokeWidth={2.4} />
          </button>
          <button aria-label="Delete" className="ml-1.5 mr-3">
            <Trash2 size={16} />
          </button>
          <button aria-label="Run" className="flex items-center gap-1 pr-0.5 text-[#55575b]">
            <Svg s={15} box={16}>
              <path d="M2 2l7 6-7 6zM9 4l5 4-5 4" stroke="#1f4460" strokeWidth="1.500" />
            </Svg>
            <ChevronDown size={9} />
          </button>
          <Toggle w="w-8" icon={<Flask badge="#4ea82c" />} n="0" />
          <Toggle w="w-8" icon={<Flask badge="#e8394e" />} n="0" />
          <Toggle w="w-8" icon={<Flask />} n="0" />
          <button aria-label="Layout" className="ml-1">
            <Svg s={18} box={18}>
              <path d="M1 4h16v10H1zM3 1h12M3 17h12" stroke="#d5d6d8" strokeWidth="1.800" />
            </Svg>
          </button>
          <span className="ml-auto self-end pb-0.5 pr-0.5">
            <ChevronDown size={9} />
          </span>
        </div>
        <label className="flex h-[23px] items-center border-b border-[#45474d] pl-1">
          <SearchGlass s={14} w={2} />
          <input aria-label="Search tests" className="w-60 bg-transparent focus:outline-none" />
        </label>
        <div className="flex items-center gap-1 pl-6 pt-1 leading-[18px] text-[#c5c6c8]">
          <SeqIcon />
          Main
        </div>
        <div className="mt-auto flex h-6 border-t-2 border-[#45474d] bg-[#2d2f33] pt-0.5 text-[#85878b]" role="tablist">
          <button role="tab" className="flex w-[93px] items-center justify-center gap-1.5 bg-[#2d2f33]">
            <span className="text-[#3c3e43]">
              <SquareCheck size={15} />
            </span>
            Test Results
          </button>
          <button role="tab" className="flex w-[126px] items-center justify-center gap-1.5 border border-[#45474d] bg-[#3b3e43]">
            <Clipboard size={15} />
            Activity Coverage
          </button>
        </div>
        <div className="h-[116px] border-t-2 border-[#45474d] px-2.5 pt-3 text-[#e4e4e4]">
          <h2 className="text-[14px] font-semibold leading-5">Test Execution Results</h2>
          <p className="mt-1.5 border-b border-[#45474d] pb-2 text-[12px] leading-4">No execution results available.</p>
        </div>
      </section>
    </div>
  );
}

function StudioWindow() {
  return (
    <div className="flex min-h-0 flex-1 flex-col overflow-hidden bg-[#2d2f33] text-[11px] text-[#b5b6b8]">
      <div className="flex h-[30px] items-center">
        <nav className="flex h-full flex-1 text-[12px]">
          <button className="w-[74px]">HOME</button>
          <button className="w-[78px]">DESIGN</button>
          <button className="w-[75px] bg-[#232325] text-[#3d8fd6]">DEBUG</button>
        </nav>
        <p className="text-[#a0a2a5]">7 bot Email Automation - UiPath Studio Community</p>
        <div className="flex flex-1 items-center justify-end">
          <span className="flex w-8 justify-center text-white">
            <SearchGlass s={16} w={2} />
          </span>
          <span className="flex w-[29px] justify-center">
            <MessageSquareText size={16} />
          </span>
          <span className="flex w-9 items-center justify-center">
            <CircleHelp size={17} />
            <ChevronDown size={8} strokeWidth={3} />
          </span>
          <span className="flex size-[22px] items-center justify-center rounded-full bg-[#3b3e43] text-white">AG</span>
          <button aria-label="Minimize" className="flex w-[53px] justify-center">
            <Minus size={12} />
          </button>
          <button aria-label="Restore window" className="flex w-8 -scale-x-100 justify-center">
            <Copy size={12} />
          </button>
          <button aria-label="Close window" className="flex w-[56px] justify-center">
            <X size={15} strokeWidth={1.5} />
          </button>
        </div>
      </div>
      <Ribbon />
      <div className="flex min-h-0 flex-1">
        <Rail
          items={[
            {
              label: "Project",
              h: "h-[58px]",
              icon: (
                <Svg s={16} box={16}>
                  <path d="M3 1h9v14H3z" stroke="#b5b6b8" strokeWidth="1.500" />
                  <path d="M10 1h4v7l-4-3z" fill="#b5b6b8" />
                </Svg>
              ),
            },
            {
              label: "Activities",
              h: "h-[68px]",
              icon: (
                <Svg s={16} box={16}>
                  <rect x="1" y="1" width="10" height="14" rx="1" stroke="#b5b6b8" strokeWidth="1.500" />
                  <path d="M4 3h4M4 13h4M6 3v10" stroke="#0a93f5" strokeWidth="2" />
                  <path d="M11 4l4 3v3l-4 2" stroke="#b5b6b8" strokeWidth="1.500" />
                </Svg>
              ),
            },
            { label: "Snippets", h: "h-[66px]", icon: <Files size={16} /> },
          ]}
        />
        <LeftDock />
        <Documents />
        <TestExplorer />
        <Rail
          right
          items={[
            {
              label: "Object Repository",
              h: "h-[115px]",
              icon: (
                <Svg s={16} box={16}>
                  <path d="M1 1h14v14H1z" stroke="#b5b6b8" strokeWidth="1.500" />
                  <path d="M4 4h5M4 7h4M12 1v14" stroke="#e4e4e4" strokeWidth="2" />
                  <circle cx="4" cy="12" r="3" fill="#3f95dc" />
                  <circle cx="7" cy="13" r="2.500" fill="#f0662f" />
                </Svg>
              ),
            },
            {
              label: "Properties",
              h: "h-[73px]",
              icon: (
                <span className="flex -scale-x-100">
                  <Wrench size={16} fill="#c5c6c8" />
                </span>
              ),
            },
            {
              label: "Outline",
              h: "h-[60px]",
              icon: (
                <Svg s={16} box={16}>
                  <path d="M2 2v12M6 6v9M10 6v9M14 2v12M6 6h4" stroke="#b5b6b8" strokeWidth="1.500" />
                  <circle cx="2" cy="2" r="2" fill="#e4e4e4" />
                  <circle cx="14" cy="2" r="2" fill="#e4e4e4" />
                </Svg>
              ),
            },
          ]}
        />
      </div>
      <div className="flex h-[33px] flex-col items-start justify-end pl-[33px]">
        <button className="border-b-[6px] border-[#45474b] leading-[17px]">Find References</button>
      </div>
      <div className="flex h-6 items-center justify-end bg-[#b55200] pr-4 text-[12px] text-[#f3ddca]">
        <button aria-label="Orchestrator" className="flex items-center gap-1">
          <Svg s={12} box={12}>
            <rect width="12" height="12" rx="1" fill="#dfa577" />
            <circle cx="6" cy="6" r="2.500" stroke="#b55200" />
          </Svg>
          <ChevronDown size={10} strokeWidth={3} />
        </button>
        <span className="ml-5 size-2 rounded-full bg-[#8e6a3a]" />
        <button className="ml-1.5 flex items-center gap-1">
          augusto.giani@poatek.com'...
          <ChevronDown size={10} strokeWidth={3} />
        </button>
        <button className="ml-[35px] flex items-center gap-1">
          <Plus size={14} strokeWidth={4} color="#dfa577" />
          Add To Source Control
          <ChevronDown size={10} strokeWidth={3} />
        </button>
        <span className="ml-4 text-white">VB, Windows - Legacy</span>
      </div>
    </div>
  );
}

export default function App() {
  return (
    <main className="grid h-screen grid-cols-2 overflow-hidden bg-black font-['Open_Sans','Noto_Sans',sans-serif]">
      <div className="flex min-h-0 min-w-0 flex-col">
        <ChromeWindow />
        <TaskbarLeft />
      </div>
      <div className="flex min-h-0 min-w-0 flex-col">
        <StudioWindow />
        <TaskbarRight />
      </div>
    </main>
  );
}
